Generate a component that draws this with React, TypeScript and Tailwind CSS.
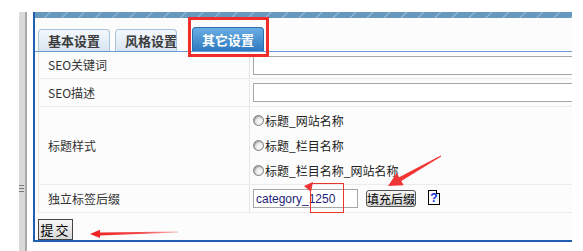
import React from "react";

const cjk = "font-['Noto_Sans_CJK_SC','Noto_Sans',sans-serif]";

function Radio({ label }: { label: string }) {
  return (
    <div className="flex h-[25px] items-center">
      <span className="w-[11px] h-[11px] rounded-full border border-[#7c7c7c] bg-[radial-gradient(circle_at_65%_65%,#ffffff,#c9c9c9)] shadow-[inset_1px_1px_1px_rgba(0,0,0,0.25)]" />
      <span className="ml-[1px] text-[12px] text-[#222]">{label}</span>
    </div>
  );
}

function Row({
  label,
  h,
  children,
}: {
  label: string;
  h: string;
  children: React.ReactNode;
}) {
  return (
    <div className={`flex ${h} border-b border-[#ebebeb]`}>
      <div className="w-[212px] shrink-0 border-x border-[#e6e6e6] pl-[9px] flex items-center text-[12px] text-[#333]">
        {label}
      </div>
      <div className="flex-1 pl-[3px] flex items-center">{children}</div>
    </div>
  );
}

export default function App() {
  return (
    <div className={`relative w-[583px] h-[251px] bg-white overflow-hidden ${cjk}`}>
      <div className="flex h-full pt-[12px]">
        <div className="w-[19px]" />
        {/* splitter bar */}
        <div className="relative w-[6px] bg-[#dadada]">
          <div className="absolute left-0 top-[173px] w-[5px] flex flex-col gap-[2px]">
            <span className="h-px bg-[#777]" />
            <span className="h-px bg-[#777]" />
            <span className="h-px bg-[#777]" />
          </div>
        </div>
        <div className="w-[2px] bg-[#a8a8a8]" />
        <div className="w-[6px]" />

        {/* panel */}
        <div className="w-[539px] h-[230px] border-l-2 border-b-2 border-[#2160b0] bg-[#fcfcfc] flex flex-col overflow-hidden">
          <div className="h-[6px] shrink-0 bg-[repeating-linear-gradient(135deg,#6799be_0px,#6799be_10px,#9bbfd9_11px,#6799be_12px)]" />

          {/* tabs */}
          <div className="h-[34px] shrink-0 flex items-end pl-[3px] border-b border-[#6c9cd6]">
            <div className="w-[72px] h-[22px] border border-b-0 border-[#a9c3db] rounded-t-[4px] bg-gradient-to-b from-[#f4f8fc] to-[#d8e5f1] pl-[9px] flex items-center text-[13px] font-bold text-[#3c3c3c]">
              基本设置
            </div>
            <div className="ml-[5px] w-[62px] h-[22px] border border-b-0 border-[#a9c3db] rounded-t-[4px] bg-gradient-to-b from-[#f4f8fc] to-[#d8e5f1] pl-[9px] flex items-center text-[13px] font-bold text-[#3c3c3c] whitespace-nowrap">
              风格设置
            </div>
            <div className="ml-[15px] w-[72px] h-[24px] border border-b-0 border-[#2b6fb4] rounded-t-[4px] bg-gradient-to-b from-[#6aaee3] to-[#2d79c1] pl-[9px] flex items-center text-[13px] font-bold text-white">
              其它设置
            </div>
          </div>

          {/* form table */}
          <div className="ml-[3px]">
            <Row label="SEO关键词" h="h-[27px]">
              <input
                className="w-[340px] h-[19px] shrink-0 border border-[#a6a6a6] bg-white outline-none"
                defaultValue=""
              />
            </Row>
            <Row label="SEO描述" h="h-[28px]">
              <input
                className="w-[340px] h-[19px] shrink-0 border border-[#a6a6a6] bg-white outline-none"
                defaultValue=""
              />
            </Row>
            <Row label="标题样式" h="h-[78px]">
              <div className="flex flex-col">
                <Radio label="标题_网站名称" />
                <Radio label="标题_栏目名称" />
                <Radio label="标题_栏目名称_网站名称" />
              </div>
            </Row>
            <Row label="独立标签后缀" h="h-[28px]">
              <input
                className="w-[105px] h-[19px] border border-[#a6a6a6] bg-white pl-[2px] outline-none text-[12px] text-[#1e1e78] font-['Liberation_Sans',Arial,sans-serif]"
                defaultValue="category_1250"
              />
              <button className="ml-[8px] w-[50px] h-[17px] border border-[#555] rounded-[3px] bg-gradient-to-b from-[#f6f6f6] to-[#d6d6d6] text-[12px] leading-[15px] text-black whitespace-nowrap">
                填充后缀
              </button>
              <span className="relative ml-[12px] -mt-[2px] w-[12px] h-[15px] border border-black bg-white flex items-center justify-center text-[12px] font-bold text-[#1030e0] font-['Liberation_Sans',Arial,sans-serif]">
                ?
                <span className="absolute -top-px -right-px w-[4px] h-[4px] bg-white border-l border-b border-black" />
              </span>
            </Row>
          </div>

          <div className="pl-[3px] pt-[3px]">
            <button className="w-[35px] h-[21px] border border-[#444] bg-gradient-to-b from-[#f6f6f6] to-[#d8d8d8] text-[13px] leading-[19px] text-black tracking-[2px]">
              提交
            </button>
          </div>
        </div>
      </div>

      {/* annotations */}
      <div className="absolute left-[188px] top-[17px] w-[81px] h-[40px] border-[3px] border-[#f22b2b]" />
      <div className="absolute left-[310px] top-[183px] w-[34px] h-[30px] border border-[#e8342f]" />
      <svg
        className="absolute left-0 top-0 pointer-events-none"
        width="583"
        height="251"
        viewBox="0 0 583 251"
      >
        <defs>
          <linearGradient id="fade" x1="90" y1="0" x2="178" y2="0" gradientUnits="userSpaceOnUse">
            <stop offset="0" stopColor="#f01e1e" />
            <stop offset="0.6" stopColor="#f25050" />
            <stop offset="1" stopColor="#f8b8b8" />
          </linearGradient>
        </defs>
        <polygon
          points="440.8,155.6 399.1,177.2 396.8,173 388,186 403.6,185.2 401.3,181 441.2,156.4"
          fill="#f03535"
        />
        <polygon points="304,186 313,182 311,192" fill="#f03535" />
        <polygon
          points="90,234 100,229.8 100,232.4 178,231.6 178,232.6 100,235.4 100,238"
          fill="url(#fade)"
        />
      </svg>
    </div>
  );
}
